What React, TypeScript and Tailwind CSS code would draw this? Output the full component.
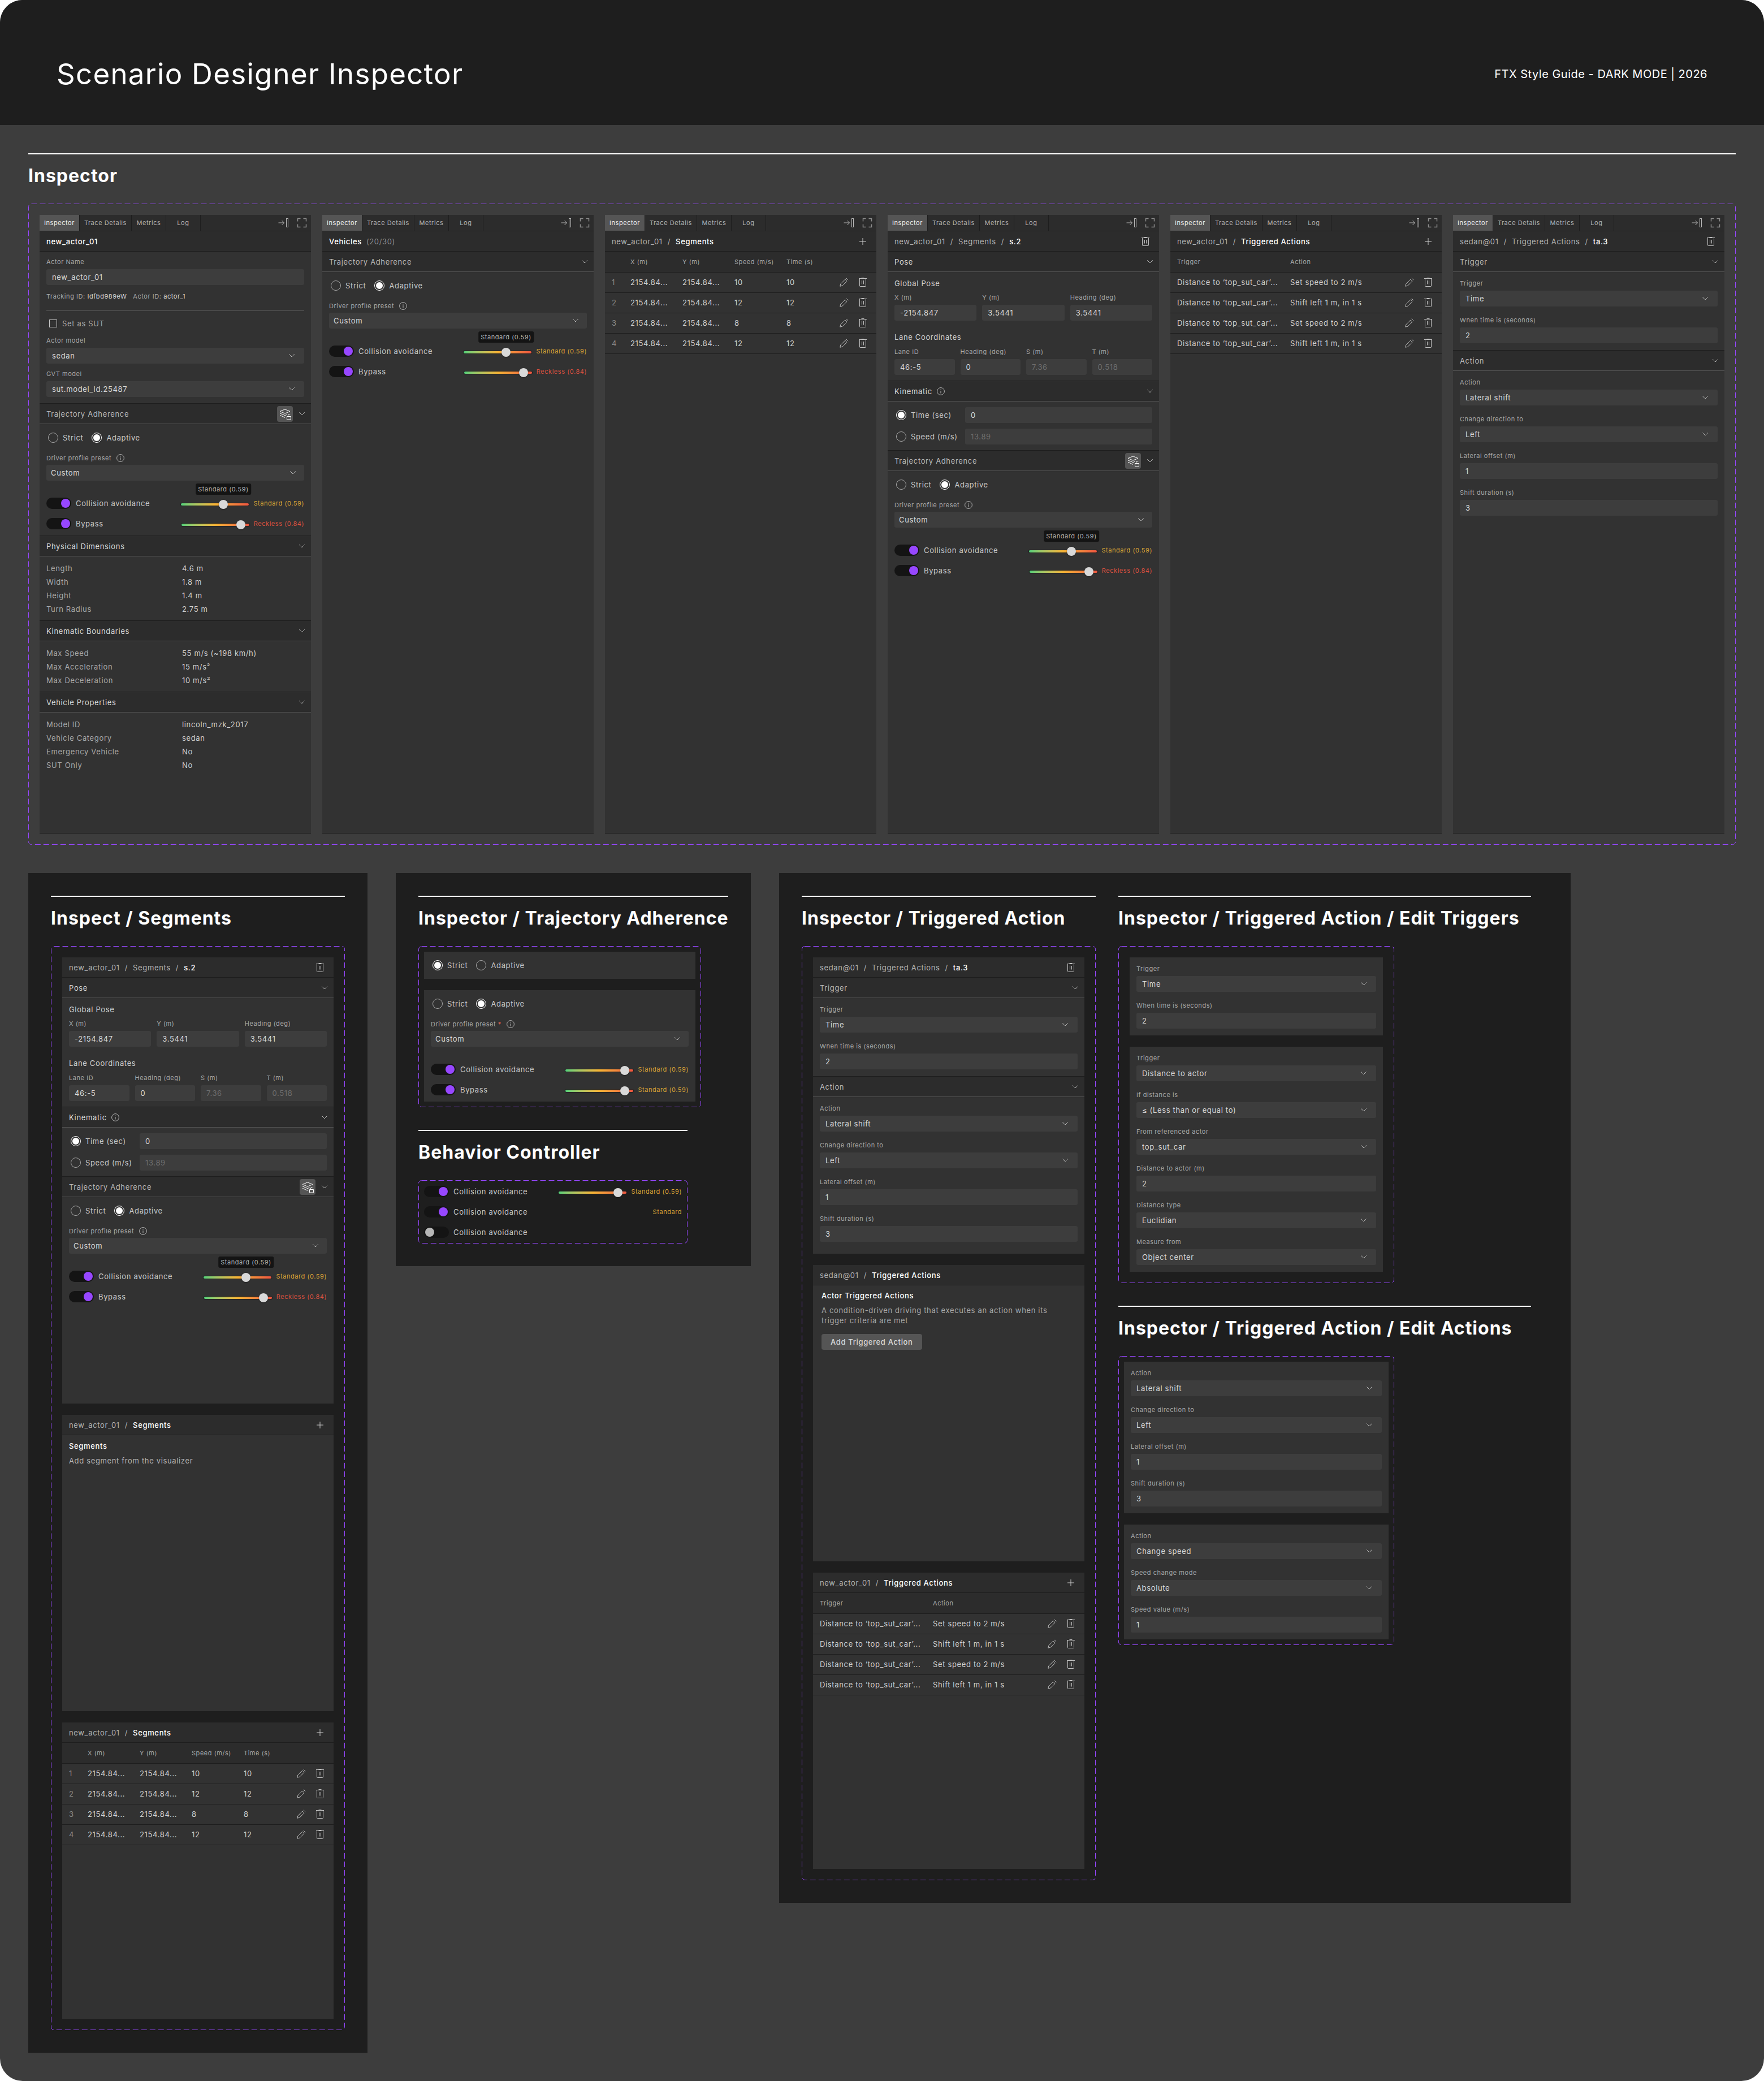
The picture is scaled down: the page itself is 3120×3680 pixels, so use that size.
import { useId, useState } from 'react'
import type { ReactNode } from 'react'

/* ---------- icons ---------- */

const ChevronIcon = () => (
  <svg className="h-[6px] w-[10px] shrink-0 text-[#b8b8b8]" viewBox="0 0 10 6" fill="none" stroke="currentColor" strokeLinecap="round" strokeLinejoin="round">
    <path d="M0.5 0.5 5 5 9.5 0.5" />
  </svg>
)

const DockIcon = () => (
  <svg className="h-[18px] w-[18px] text-[#b8b8b8]" viewBox="0 0 18 18" fill="none" stroke="currentColor">
    <path d="M0.5 9h10M6.5 5l4 4-4 4" />
    <rect x="14.5" y="1.5" width="3" height="15" />
  </svg>
)

const FullscreenIcon = () => (
  <svg className="h-[18px] w-[18px] text-[#8c8c8c]" viewBox="0 0 18 18" fill="none" stroke="currentColor" strokeWidth="1.5">
    <path d="M1.5 6.5v-5h5M11.5 1.5h5v5M16.5 11.5v5h-5M6.5 16.5h-5v-5" />
  </svg>
)

const TrashIcon = () => (
  <svg className="h-4 w-4" viewBox="0 0 16 16" fill="none" stroke="currentColor">
    <path d="M1 1.5h14M5.5 0.5h5M2.5 1.5v13a1 1 0 0 0 1 1h9a1 1 0 0 0 1-1v-13M6.5 5v6.5M9.5 5v6.5" />
  </svg>
)

const PencilIcon = () => (
  <svg className="h-4 w-4" viewBox="0 0 16 16" fill="none" stroke="currentColor" strokeLinejoin="round">
    <path d="M0.8 15.2l1-4.2 8-8 3.2 3.2-8 8zM11.8 0.8l3.4 3.4" />
  </svg>
)

const PlusIcon = () => (
  <svg className="h-4 w-4" viewBox="0 0 16 16" fill="none" stroke="currentColor">
    <path d="M8 2v12M2 8h12" />
  </svg>
)

const InfoIcon = () => (
  <svg className="h-[14px] w-[14px] shrink-0 text-[#b8b8b8]" viewBox="0 0 14 14" fill="none" stroke="currentColor">
    <circle cx="7" cy="7" r="6.4" />
    <path d="M7 6v4.5M7 3.5v1.2" />
  </svg>
)

const LayersLockIcon = () => (
  <svg className="h-7 w-7" viewBox="0 0 28 28" fill="none" stroke="currentColor" strokeLinejoin="round">
    <path d="M5 9.5 14 5.8l9 3.7-9 3.7zM5 12.8l9 3.8 3.5-1.4M5 16.2l9 4.2" />
    <path d="M17.5 18.5h7v5.5h-7zM19.5 18.5v-2.3a1.8 1.8 0 0 1 3.4-.6" />
  </svg>
)

/* ---------- layout helpers ---------- */

function Dashed({ className = '', children }: { className?: string; children: ReactNode }) {
  return (
    <div className={`relative ${className}`}>
      <svg className="pointer-events-none absolute inset-0 h-full w-full">
        <rect x="0.5" y="0.5" rx="5" fill="none" stroke="#9747ff" strokeDasharray="10 5" className="h-[calc(100%-1px)] w-[calc(100%-1px)]" />
      </svg>
      {children}
    </div>
  )
}

function Section({ title, className = '', children }: { title: string; className?: string; children: ReactNode }) {
  return (
    <section className={`border-t-2 border-white pt-[19px] ${className}`}>
      <h2 className="mb-[30px] text-[32px] leading-[38px] font-bold tracking-[1px] whitespace-nowrap text-white">{title}</h2>
      {children}
    </section>
  )
}

function Card({ className = '', children }: { className?: string; children: ReactNode }) {
  return <div className={`bg-[#1e1e1e] p-10 ${className}`}>{children}</div>
}

const TABS = ['Inspector', 'Trace Details', 'Metrics', 'Log']

function Tabs() {
  const [active, setActive] = useState('Inspector')
  return (
    <div className="flex h-[29px] border-b border-[#1e1e1e] bg-[#2c2c2c]" role="tablist">
      {TABS.map((t) => (
        <button
          key={t}
          role="tab"
          aria-selected={t === active}
          onClick={() => setActive(t)}
          className={`min-w-[61px] border-r border-[#1e1e1e] px-2 text-[11px] tracking-wider ${t === active ? 'bg-[#555] text-[#f0f0f0]' : 'text-[#b3b3b3]'}`}
        >
          {t}
        </button>
      ))}
      <div className="ml-auto flex items-center gap-[15px] pr-[7px]">
        <button aria-label="Dock panel"><DockIcon /></button>
        <button aria-label="Fullscreen"><FullscreenIcon /></button>
      </div>
    </div>
  )
}

function Panel({ tabs, className = '', children }: { tabs?: boolean; className?: string; children: ReactNode }) {
  return (
    <div className={`bg-[#323232] ${className}`}>
      {tabs && <Tabs />}
      {children}
    </div>
  )
}

function TitleBar({ path, action }: { path: string[]; action?: 'add' | 'delete' }) {
  return (
    <div className="flex h-9 items-center justify-between border-b border-[#1e1e1e] bg-[#2c2c2c] pr-4 pl-3">
      <div className="flex gap-[9px] text-[#b3b3b3]">
        {path.map((p, i) => (
          <span key={p} className="flex gap-[9px]">
            <span className={i === path.length - 1 ? 'font-medium text-white' : ''}>{p}</span>
            {i < path.length - 1 && <span>/</span>}
          </span>
        ))}
      </div>
      {action === 'add' && <button aria-label="Add" className="text-[#d0d0d0]"><PlusIcon /></button>}
      {action === 'delete' && <button aria-label="Delete" className="text-[#c0c0c0]"><TrashIcon /></button>}
    </div>
  )
}

interface GroupProps {
  title: string
  first?: boolean
  bright?: boolean
  info?: boolean
  lock?: boolean
  children: ReactNode
}

function Group({ title, first, bright, info, lock, children }: GroupProps) {
  return (
    <div>
      <div className={`flex items-center gap-[11px] border-b border-b-[#555] bg-[#2c2c2c] pr-[11px] pl-3 ${first ? 'h-9' : 'h-[37px] border-t border-t-[#1e1e1e]'}`}>
        <h3 className={`mr-auto flex items-center gap-2 ${bright ? 'text-[#d9d9d9]' : 'text-[#b8b8b8]'}`}>
          {title}
          {info && <InfoIcon />}
        </h3>
        {lock && (
          <button aria-label="Unlock layers" className="rounded bg-[#555] text-white"><LayersLockIcon /></button>
        )}
        <button aria-label={`Collapse ${title}`}><ChevronIcon /></button>
      </div>
      {children}
    </div>
  )
}

/* ---------- controls ---------- */

const LABEL = 'text-[11px] leading-4 tracking-wider text-[#a8a8a8]'

function TextInput({ id, value, disabled, label }: { id?: string; value: string; disabled?: boolean; label?: string }) {
  return (
    <input
      id={id}
      aria-label={label}
      defaultValue={value}
      disabled={disabled}
      className="h-7 w-full min-w-0 rounded-[3px] bg-[#3d3d3d] px-[10px] text-[#d9d9d9] disabled:text-[#6e6e6e]"
    />
  )
}

function Select({ id, value, tight }: { id?: string; value: string; tight?: boolean }) {
  return (
    <div className="relative">
      <select id={id} className={`block h-7 w-full appearance-none rounded-[3px] bg-[#3d3d3d] text-[#d9d9d9] ${tight ? 'px-2' : 'px-[10px]'}`}>
        <option>{value}</option>
      </select>
      <span className={`pointer-events-none absolute inset-y-0 flex items-center ${tight ? 'right-[15px]' : 'right-[17px]'}`}>
        <ChevronIcon />
      </span>
    </div>
  )
}

interface FieldData {
  label: string
  value: string
  select?: boolean
  disabled?: boolean
}

function Field({ label, value, select, disabled }: FieldData) {
  const id = useId()
  return (
    <div className="flex min-w-0 flex-1 flex-col gap-[5px]">
      <label htmlFor={id} className={`${LABEL} whitespace-nowrap`}>{label}</label>
      {select ? <Select id={id} value={value} /> : <TextInput id={id} value={value} disabled={disabled} />}
    </div>
  )
}

function Fields({ items }: { items: FieldData[] }) {
  return (
    <div className="flex flex-col gap-4 p-3">
      {items.map((f) => <Field key={f.label} {...f} />)}
    </div>
  )
}

function Radio({ name, label, checked }: { name: string; label: string; checked?: boolean }) {
  return (
    <label className="flex items-center gap-2 text-[#c8c8c8]">
      <input
        type="radio"
        name={name}
        defaultChecked={checked}
        className="flex h-[18px] w-[18px] appearance-none items-center justify-center rounded-full border border-[#a8a8a8] before:h-3 before:w-3 before:rounded-full checked:border-white checked:before:bg-white"
      />
      {label}
    </label>
  )
}

interface BehaviorProps {
  label: string
  on?: boolean
  level?: number
  text?: string
  red?: boolean
  tooltip?: string
}

function Behavior({ label, on = true, level, text, red, tooltip }: BehaviorProps) {
  return (
    <div className="flex h-5 items-center">
      <label className="mr-auto flex items-center gap-2 text-[#c8c8c8]">
        <input
          type="checkbox"
          role="switch"
          defaultChecked={on}
          className="flex h-5 w-11 appearance-none items-center rounded-full bg-[#141414] px-0.5 before:h-4 before:w-4 before:rounded-full before:bg-[#b8b8b8] checked:justify-end checked:before:bg-[#9747ff]"
        />
        {label}
      </label>
      {level !== undefined && (
        <span className="relative mt-1 mr-2 flex h-4 w-[120px] items-center">
          <input
            type="range"
            aria-label={`${label} level`}
            defaultValue={level}
            className="h-1 w-full appearance-none rounded-full bg-linear-to-r from-[#4fd07a] via-[#f5b335] to-[#ee5540] shadow-[0_0_1px_1px_#1e1e1e] [&::-webkit-slider-thumb]:h-4 [&::-webkit-slider-thumb]:w-4 [&::-webkit-slider-thumb]:appearance-none [&::-webkit-slider-thumb]:rounded-full [&::-webkit-slider-thumb]:bg-[#d9d9d9] [&::-webkit-slider-thumb]:shadow-[0_1px_2px_#00000066]"
          />
          {tooltip && (
            <span
              className="absolute bottom-full mb-[9px] -translate-x-1/2 rounded-[3px] bg-[#141414] px-1 text-[11px] leading-5 tracking-wider whitespace-nowrap text-[#b3b3b3]"
              style={{ left: `calc(8px + (100% - 16px) * ${level / 100})` }}
            >
              {tooltip}
            </span>
          )}
        </span>
      )}
      {text && <span className={`text-[11px] tracking-wider ${red ? 'text-[#d9503f]' : 'text-[#d9a336]'}`}>{text}</span>}
    </div>
  )
}

/* ---------- panel bodies ---------- */

function Adherence({ strict, behaviors, required }: { strict?: boolean; behaviors?: BehaviorProps[]; required?: boolean }) {
  const id = useId()
  return (
    <div className="px-3 pt-[15px] pb-[11px]">
      <div className="flex h-[18px] gap-[15px] pl-[3px]">
        <Radio name={id} label="Strict" checked={strict} />
        <Radio name={id} label="Adaptive" checked={!strict} />
      </div>
      {behaviors && (
        <>
          <div className="mt-[19px] mb-1 flex items-center gap-[9px]">
            <label htmlFor={`${id}-preset`} className={LABEL}>
              Driver profile preset{required && <span className="text-[#e2604f]"> *</span>}
            </label>
            <InfoIcon />
          </div>
          <Select id={`${id}-preset`} value="Custom" tight />
          <div className="mt-[30px] flex flex-col gap-4">
            {behaviors.map((b) => <Behavior key={b.label} {...b} />)}
          </div>
        </>
      )}
    </div>
  )
}

const MIXED: BehaviorProps[] = [
  { label: 'Collision avoidance', level: 64, text: 'Standard (0.59)', tooltip: 'Standard (0.59)' },
  { label: 'Bypass', level: 93, text: 'Reckless (0.84)', red: true },
]

const EVEN: BehaviorProps[] = [
  { label: 'Collision avoidance', level: 93, text: 'Standard (0.59)' },
  { label: 'Bypass', level: 93, text: 'Standard (0.59)' },
]

function Facts({ rows }: { rows: [string, string][] }) {
  return (
    <dl className="px-3 pt-[9px] pb-2 leading-6">
      {rows.map(([k, v]) => (
        <div key={k} className="flex">
          <dt className="w-[240px] text-[#a8a8a8]">{k}</dt>
          <dd className="text-[#d0d0d0]">{v}</dd>
        </div>
      ))}
    </dl>
  )
}

function ActorBody() {
  return (
    <>
      <div className="px-3 pt-[10px]">
        <Field label="Actor Name" value="new_actor_01" />
        <p className={`${LABEL} mt-3 flex gap-[11px]`}>
          <span>Tracking ID: <span className="text-[#d9d9d9]">Idfbd989eW</span></span>
          <span>Actor ID: <span className="text-[#d9d9d9]">actor_1</span></span>
        </p>
        <hr className="mt-4 border-t-2 border-[#484848]" />
        <label className="mt-[14px] flex items-center gap-[9px] pl-[5px] leading-4 text-[#a8a8a8]">
          <input type="checkbox" className="h-[14px] w-[14px] appearance-none border border-[#c8c8c8] checked:bg-[#9747ff]" />
          Set as SUT
        </label>
        <div className="mt-[14px] mb-[11px] flex flex-col gap-[10px]">
          <Field label="Actor model" value="sedan" select />
          <Field label="GVT model" value="sut.model_Id.25487" select />
        </div>
      </div>
      <Group title="Trajectory Adherence" lock><Adherence behaviors={MIXED} /></Group>
      <Group title="Physical Dimensions" bright>
        <Facts rows={[['Length', '4.6 m'], ['Width', '1.8 m'], ['Height', '1.4 m'], ['Turn Radius', '2.75 m']]} />
      </Group>
      <Group title="Kinematic Boundaries" bright>
        <Facts rows={[['Max Speed', '55 m/s (~198 km/h)'], ['Max Acceleration', '15 m/s²'], ['Max Deceleration', '10 m/s²']]} />
      </Group>
      <Group title="Vehicle Properties" bright>
        <Facts rows={[['Model ID', 'lincoln_mzk_2017'], ['Vehicle Category', 'sedan'], ['Emergency Vehicle', 'No'], ['SUT Only', 'No']]} />
      </Group>
    </>
  )
}

function SegmentDetail() {
  const id = useId()
  return (
    <>
      <TitleBar path={['new_actor_01', 'Segments', 's.2']} action="delete" />
      <Group title="Pose" first bright>
        <div className="px-3 pt-3 pb-[10px]">
          <h4 className="leading-4 text-[#d0d0d0]">Global Pose</h4>
          <div className="mt-[9px] flex gap-[10px]">
            <Field label="X (m)" value="-2154.847" />
            <Field label="Y (m)" value="3.5441" />
            <Field label="Heading (deg)" value="3.5441" />
          </div>
          <h4 className="mt-[21px] leading-4 text-[#d0d0d0]">Lane Coordinates</h4>
          <div className="mt-[10px] flex gap-[10px]">
            <Field label="Lane ID" value="46:-5" />
            <Field label="Heading (deg)" value="0" />
            <Field label="S (m)" value="7.36" disabled />
            <Field label="T (m)" value="0.518" disabled />
          </div>
        </div>
      </Group>
      <Group title="Kinematic" info bright>
        <div className="grid grid-cols-[122px_1fr] items-center gap-y-[10px] py-[10px] pr-3 pl-[15px]">
          <Radio name={id} label="Time (sec)" checked />
          <TextInput label="Time (sec)" value="0" />
          <Radio name={id} label="Speed (m/s)" />
          <TextInput label="Speed (m/s)" value="13.89" disabled />
        </div>
      </Group>
      <Group title="Trajectory Adherence" lock><Adherence behaviors={MIXED} /></Group>
    </>
  )
}

function RowActions() {
  return (
    <td className="pr-4">
      <div className="flex justify-end gap-[17px] text-[#c0c0c0]">
        <button aria-label="Edit"><PencilIcon /></button>
        <button aria-label="Delete"><TrashIcon /></button>
      </div>
    </td>
  )
}

const HEAD_ROW = 'h-9 border-b border-[#1e1e1e] bg-[#2c2c2c] text-left text-[11px] tracking-wider text-[#a8a8a8]'
const BODY_ROW = 'h-9 border-b border-[#1e1e1e] text-[#d0d0d0]'

function SegmentTable() {
  return (
    <>
      <TitleBar path={['new_actor_01', 'Segments']} action="add" />
      <table className="w-full table-fixed">
        <thead>
          <tr className={HEAD_ROW}>
            <th className="w-[45px]" />
            <th className="w-[92px] font-normal">X (m)</th>
            <th className="w-[92px] font-normal">Y (m)</th>
            <th className="w-[92px] font-normal">Speed (m/s)</th>
            <th className="w-[70px] font-normal">Time (s)</th>
            <th />
          </tr>
        </thead>
        <tbody>
          {['10', '12', '8', '12'].map((v, i) => (
            <tr key={i} className={BODY_ROW}>
              <td className="pl-3 text-[#8c8c8c]">{i + 1}</td>
              <td>2154.84...</td>
              <td>2154.84...</td>
              <td>{v}</td>
              <td>{v}</td>
              <RowActions />
            </tr>
          ))}
        </tbody>
      </table>
    </>
  )
}

function ActionTable() {
  return (
    <>
      <TitleBar path={['new_actor_01', 'Triggered Actions']} action="add" />
      <table className="w-full table-fixed">
        <thead>
          <tr className={HEAD_ROW}>
            <th className="w-[212px] pl-3 font-normal">Trigger</th>
            <th className="font-normal">Action</th>
            <th className="w-[80px]" />
          </tr>
        </thead>
        <tbody>
          {['Set speed to 2 m/s', 'Shift left 1 m, in 1 s', 'Set speed to 2 m/s', 'Shift left 1 m, in 1 s'].map((a, i) => (
            <tr key={i} className={BODY_ROW}>
              <td className="pl-3">Distance to ‘top_sut_car’...</td>
              <td>{a}</td>
              <RowActions />
            </tr>
          ))}
        </tbody>
      </table>
    </>
  )
}

const TIME_TRIGGER: FieldData[] = [
  { label: 'Trigger', value: 'Time', select: true },
  { label: 'When time is (seconds)', value: '2' },
]

const DISTANCE_TRIGGER: FieldData[] = [
  { label: 'Trigger', value: 'Distance to actor', select: true },
  { label: 'If distance is', value: '≤ (Less than or equal to)', select: true },
  { label: 'From referenced actor', value: 'top_sut_car', select: true },
  { label: 'Distance to actor (m)', value: '2' },
  { label: 'Distance type', value: 'Euclidian', select: true },
  { label: 'Measure from', value: 'Object center', select: true },
]

const SHIFT_ACTION: FieldData[] = [
  { label: 'Action', value: 'Lateral shift', select: true },
  { label: 'Change direction to', value: 'Left', select: true },
  { label: 'Lateral offset (m)', value: '1' },
  { label: 'Shift duration (s)', value: '3' },
]

const SPEED_ACTION: FieldData[] = [
  { label: 'Action', value: 'Change speed', select: true },
  { label: 'Speed change mode', value: 'Absolute', select: true },
  { label: 'Speed value (m/s)', value: '1' },
]

function ActionDetail() {
  return (
    <>
      <TitleBar path={['sedan@01', 'Triggered Actions', 'ta.3']} action="delete" />
      <Group title="Trigger" first><Fields items={TIME_TRIGGER} /></Group>
      <Group title="Action"><Fields items={SHIFT_ACTION} /></Group>
    </>
  )
}

/* ---------- page ---------- */

export default function App() {
  return (
    <div className="bg-white">
      <div className="overflow-hidden rounded-[40px] bg-[#3d3d3d] pb-[50px] font-['Inter',sans-serif] text-[13px] leading-4 tracking-wider text-[#d0d0d0]">
        <header className="flex h-[221px] items-center justify-between bg-[#1e1e1e] px-[100px] pt-10 text-white">
          <h1 className="text-[51px] leading-none tracking-wide">Scenario Designer Inspector</h1>
          <p className="text-xl tracking-wide">FTX Style Guide - DARK MODE | 2026</p>
        </header>

        <main className="px-[50px] pt-[50px]">
          <Section title="Inspector">
            <Dashed className="grid grid-cols-6 gap-5 p-5">
              <Panel tabs className="min-h-[1094px] border-b border-[#1e1e1e]">
                <TitleBar path={['new_actor_01']} />
                <ActorBody />
              </Panel>
              <Panel tabs className="border-b border-[#1e1e1e]">
                <div className="flex h-9 items-center gap-2 border-b border-[#1e1e1e] bg-[#2c2c2c] px-3">
                  <span className="font-medium text-white">Vehicles</span>
                  <span className="text-[#8c8c8c]">(20/30)</span>
                </div>
                <Group title="Trajectory Adherence" first><Adherence behaviors={MIXED} /></Group>
              </Panel>
              <Panel tabs className="border-b border-[#1e1e1e]"><SegmentTable /></Panel>
              <Panel tabs className="border-b border-[#1e1e1e]"><SegmentDetail /></Panel>
              <Panel tabs className="border-b border-[#1e1e1e]"><ActionTable /></Panel>
              <Panel tabs className="border-b border-[#1e1e1e]"><ActionDetail /></Panel>
            </Dashed>
          </Section>

          <div className="mt-[50px] flex items-start gap-[50px]">
            <Card className="w-[600px]">
              <Section title="Inspect / Segments">
                <Dashed className="flex flex-col gap-5 p-5">
                  <Panel className="min-h-[789px]"><SegmentDetail /></Panel>
                  <Panel className="min-h-[524px]">
                    <TitleBar path={['new_actor_01', 'Segments']} action="add" />
                    <div className="px-3 pt-[10px]">
                      <h3 className="mb-2 leading-[18px] font-medium text-white">Segments</h3>
                      <p className="leading-[18px] text-[#b3b3b3]">Add segment from the visualizer</p>
                    </div>
                  </Panel>
                  <Panel className="min-h-[524px]"><SegmentTable /></Panel>
                </Dashed>
              </Section>
            </Card>

            <Card className="flex w-[628px] flex-col items-start gap-10">
              <Section title="Inspector / Trajectory Adherence" className="w-full">
                <Dashed className="flex w-[500px] flex-col gap-5 p-[10px]">
                  <Panel className="pb-1"><Adherence strict /></Panel>
                  <Panel><Adherence behaviors={EVEN} required /></Panel>
                </Dashed>
              </Section>
              <Section title="Behavior Controller" className="w-[476px]">
                <Dashed className="flex flex-col gap-4 p-[10px]">
                  <Behavior label="Collision avoidance" level={93} text="Standard (0.59)" />
                  <Behavior label="Collision avoidance" text="Standard" />
                  <Behavior label="Collision avoidance" on={false} />
                </Dashed>
              </Section>
            </Card>

            <Card className="flex w-[1400px] items-start gap-10">
              <Section title="Inspector / Triggered Action" className="w-[520px]">
                <Dashed className="flex flex-col gap-5 p-5">
                  <Panel className="min-h-[524px]"><ActionDetail /></Panel>
                  <Panel className="min-h-[524px]">
                    <TitleBar path={['sedan@01', 'Triggered Actions']} />
                    <div className="px-[15px] pt-[9px]">
                      <h3 className="mb-2 leading-[18px] font-medium text-white">Actor Triggered Actions</h3>
                      <p className="max-w-[430px] leading-[18px] text-[#a8a8a8]">
                        A condition-driven driving that executes an action when its trigger criteria are met
                      </p>
                      <button className="mt-[15px] h-7 rounded bg-[#555] px-4 font-medium text-[#d9d9d9]">Add Triggered Action</button>
                    </div>
                  </Panel>
                  <Panel className="min-h-[524px]"><ActionTable /></Panel>
                </Dashed>
              </Section>
              <div className="flex w-[730px] flex-col gap-10">
                <Section title="Inspector / Triggered Action / Edit Triggers">
                  <Dashed className="flex w-[488px] flex-col gap-5 p-5">
                    <Panel><Fields items={TIME_TRIGGER} /></Panel>
                    <Panel><Fields items={DISTANCE_TRIGGER} /></Panel>
                  </Dashed>
                </Section>
                <Section title="Inspector / Triggered Action / Edit Actions">
                  <Dashed className="flex w-[488px] flex-col gap-5 p-[10px]">
                    <Panel><Fields items={SHIFT_ACTION} /></Panel>
                    <Panel><Fields items={SPEED_ACTION} /></Panel>
                  </Dashed>
                </Section>
              </div>
            </Card>
          </div>
        </main>
      </div>
    </div>
  )
}
